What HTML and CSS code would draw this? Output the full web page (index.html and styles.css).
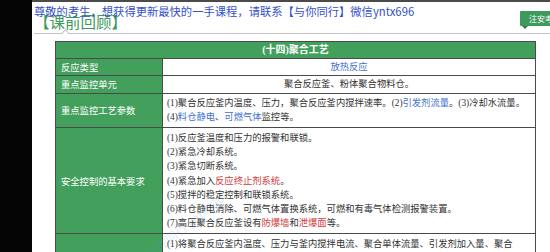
FILE: index.html
```html
<!DOCTYPE html>
<html lang="zh">
<head>
<meta charset="utf-8">
<link rel="stylesheet" href="styles.css">
</head>
<body>
<div class="screen">
  <div class="side"></div>
  <div class="main">
    <div class="notice">尊敬的考生，想获得更新最快的一手课程，请联系【与你同行】微信yntx696</div>
    <div class="heading">【课前回顾】</div>
    <div class="rule"><span class="notch"></span></div>
    <div class="tab">注安考试</div>
    <table class="grid">
      <colgroup><col class="c1"><col class="c2"></colgroup>
      <tr class="head"><td colspan="2">(十四)聚合工艺</td></tr>
      <tr class="single"><td class="label">反应类型</td><td class="val center blue">放热反应</td></tr>
      <tr class="single"><td class="label">重点监控单元</td><td class="val center">聚合反应釜、粉体聚合物料仓。</td></tr>
      <tr class="multi"><td class="label">重点监控工艺参数</td><td class="val">
        <div class="ln">(1)聚合反应釜内温度、压力，聚合反应釜内搅拌速率。(2)<span class="blue">引发剂流量</span>。(3)冷却水流量。</div>
        <div class="ln">(4)<span class="blue">料仓静电</span>、<span class="blue">可燃气体</span>监控等。</div>
      </td></tr>
      <tr class="multi"><td class="label">安全控制的基本要求</td><td class="val">
        <div class="ln">(1)反应釜温度和压力的报警和联锁。</div>
        <div class="ln">(2)紧急冷却系统。</div>
        <div class="ln">(3)紧急切断系统。</div>
        <div class="ln">(4)紧急加入<span class="red">反应终止剂系统</span>。</div>
        <div class="ln">(5)搅拌的稳定控制和联锁系统。</div>
        <div class="ln">(6)料仓静电消除、可燃气体置换系统，可燃和有毒气体检测报警装置。</div>
        <div class="ln">(7)高压聚合反应釜设有<span class="red">防爆墙</span>和<span class="red">泄爆面</span>等。</div>
      </td></tr>
      <tr class="multi"><td class="label">宜采用的控制方式</td><td class="val">
        <div class="ln">(1)将聚合反应釜内温度、压力与釜内搅拌电流、聚合单体流量、引发剂加入量、聚合</div>
        <div class="ln">反应釜夹套冷却水进水阀形成联锁关系，在聚合反应釜处设立紧急停车系统。</div>
        <div class="ln">(2)当反应超温、搅拌失效或冷却失效时，能及时加入聚合反应终止剂。</div>
        <div class="ln">(3)安全泄放系统。</div>
      </td></tr>
    </table>
    <div class="watermark">与你同行 yntx696</div>
  </div>
</div>
</body>
</html>
```
FILE: styles.css
```css
html, body {
  margin: 0;
  padding: 0;
  width: 550px;
  height: 252px;
  overflow: hidden;
  background: #000;
}
.screen {
  display: flex;
  width: 550px;
  height: 252px;
}
.side {
  width: 32px;
  flex: none;
  background: #050505;
}
.main {
  position: relative;
  flex: 1;
  background: #fff;
  border-top: 2px solid #4a4a4a;
  overflow: hidden;
  font-family: "Liberation Serif", "Noto Sans CJK SC", serif;
}
.notice {
  font-family: "Noto Sans CJK SC", sans-serif;
  font-size: 11.3px;
  line-height: 14px;
  color: #3550c8;
  padding: 2px 0 0 2px;
  white-space: nowrap;
  position: relative;
  z-index: 2;
}
.heading {
  font-family: "Noto Sans CJK SC", sans-serif;
  font-size: 15.5px;
  line-height: 16px;
  color: #3e9a5c;
  margin: -5px 0 0 2px;
  white-space: nowrap;
}
.rule {
  position: relative;
  height: 1px;
  background: #c4c4c4;
  margin: 4px 0 0 2px;
}
.notch {
  position: absolute;
  left: 29px;
  top: -3px;
  width: 4px;
  height: 4px;
  background: #fff;
  border-top: 1px solid #c4c4c4;
  border-left: 1px solid #c4c4c4;
  transform: rotate(45deg);
}
.tab {
  position: absolute;
  left: 488px;
  top: 9px;
  width: 40px;
  height: 15px;
  background: #3e9a5c;
  color: #fff;
  font-family: "Noto Sans CJK SC", sans-serif;
  font-size: 8px;
  line-height: 15px;
  padding-left: 9px;
  white-space: nowrap;
  border-radius: 1px;
}
.tab::after {
  content: "";
  position: absolute;
  left: 2px;
  bottom: -3px;
  border-left: 3px solid transparent;
  border-right: 3px solid transparent;
  border-top: 3px solid #2f7d48;
}
.grid {
  margin: 7px 0 0 23px;
  width: 480px;
  border-collapse: collapse;
  table-layout: fixed;
  border: 1px solid #3a3a3a;
}
.c1 { width: 107px; }
.c2 { width: 373px; }
.grid td {
  border: 1px solid #4a4a4a;
  font-size: 9.3px;
  line-height: 14.3px;
  color: #333;
  padding: 0 4px;
  white-space: nowrap;
  overflow: hidden;
}
.head td {
  background: #43a05c;
  color: #fff;
  font-weight: bold;
  font-size: 10px;
  text-align: center;
  height: 16px;
  line-height: 16px;
  padding: 0;
}
.label {
  background: #43a05c;
  color: #fff !important;
  font-family: "Noto Sans CJK SC", sans-serif;
  vertical-align: middle;
  padding-left: 5px !important;
}
.single td {
  padding-top: 1px;
  padding-bottom: 1px;
}
.multi td {
  padding-top: 2.5px;
  padding-bottom: 2.5px;
}
.val.center { text-align: center; }
.val { vertical-align: top; }
.blue { color: #3f70d0; }
.grid td.blue { color: #3f70d0; }
.red { color: #d03c3c; }
.ln { white-space: nowrap; }
.watermark {
  position: absolute;
  left: 105px;
  top: 215px;
  font-family: "Noto Sans CJK SC", sans-serif;
  font-size: 12px;
  color: rgba(90, 140, 220, 0.2);
  transform: rotate(-38deg);
  white-space: nowrap;
  pointer-events: none;
}
```
